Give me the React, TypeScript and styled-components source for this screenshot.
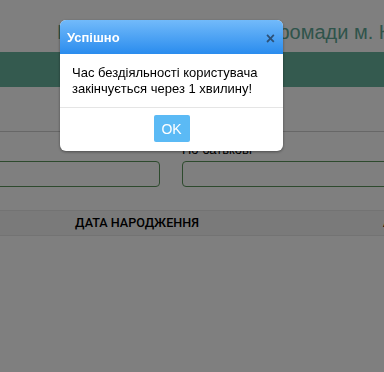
import React from 'react'
import styled, { createGlobalStyle } from 'styled-components'

const GlobalStyle = createGlobalStyle`
  html, body {
    margin: 0;
    padding: 0;
    background: #fff;
    font-family: Arial, "Liberation Sans", sans-serif;
    overflow: hidden;
  }
`

export default function App() {
  return (
    <>
      <GlobalStyle />
      <Page>
        <Title>Реєстр територіальної громади м. Києва</Title>
        <Band />
        <Divider />
        <FormRow>
          <Field>
            <Label>&nbsp;</Label>
            <Input />
          </Field>
          <Field>
            <Label>По батькові</Label>
            <Input />
          </Field>
        </FormRow>
        <TableHead>
          <HeadCell>ДАТА НАРОДЖЕННЯ</HeadCell>
          <HeadCell $align='left'>АДРЕСА</HeadCell>
        </TableHead>
      </Page>

      <Overlay />
      <Modal>
        <ModalHeader>
          <ModalTitle>Успішно</ModalTitle>
          <Close>×</Close>
        </ModalHeader>
        <ModalBody>
          Час бездіяльності користувача
          <br />
          закінчується через 1 хвилину!
        </ModalBody>
        <ModalFooter>
          <OkButton>OK</OkButton>
        </ModalFooter>
      </Modal>
    </>
  )
}

const Page = styled.div`
  width: 384px;
  height: 372px;
  overflow: hidden;
`

const Title = styled.h1`
  margin: 0;
  padding: 20px 0 0 57px;
  height: 52px;
  box-sizing: border-box;
  white-space: nowrap;
  font-weight: normal;
  font-size: 20px;
  line-height: 24px;
  color: #5ea896;
`

const Band = styled.div`
  height: 35px;
  background: #69b49f;
`

const Divider = styled.div`
  margin-top: 44px;
  border-top: 1px solid #cfcfcf;
`

const FormRow = styled.div`
  display: grid;
  grid-template-columns: 180px 1fr;
  gap: 22px;
  margin: 0 -30px 0 -20px;
  padding-top: 10px;
`

const Field = styled.div`
  display: flex;
  flex-direction: column;
`

const Label = styled.label`
  font-size: 13px;
  line-height: 16px;
  color: #000;
  margin-bottom: 3px;
`

const Input = styled.div`
  height: 24px;
  border: 1px solid #5a945a;
  border-radius: 4px;
  background: #fff;
`

const TableHead = styled.div`
  display: grid;
  grid-template-columns: 274px 1fr;
  margin-top: 23px;
  height: 26px;
  border-top: 1px solid #e6e6e6;
  border-bottom: 1px solid #e6e6e6;
  background: #f5f5f5;
  box-sizing: border-box;
`

const HeadCell = styled.div<{ $align?: string }>`
  font-family: Roboto, Arial, sans-serif;
  font-weight: 500;
  font-size: 12.6px;
  line-height: 23px;
  color: #000;
  text-align: ${p => p.$align || 'center'};
  padding-left: ${p => (p.$align === 'left' ? '109px' : '0')};
  white-space: nowrap;
`

const Overlay = styled.div`
  position: fixed;
  inset: 0;
  background: rgba(0, 0, 0, 0.5);
`

const Modal = styled.div`
  position: fixed;
  top: 20px;
  left: 60px;
  width: 223px;
  background: #fff;
  border-radius: 6px;
  overflow: hidden;
  box-shadow: 0 1px 3px rgba(0, 0, 0, 0.4);
`

const ModalHeader = styled.div`
  height: 34px;
  display: flex;
  align-items: center;
  justify-content: space-between;
  padding: 0 8px 0 7px;
  background: linear-gradient(#72bafa, #2a8cee);
`

const ModalTitle = styled.span`
  font-weight: bold;
  font-size: 13px;
  color: #fff;
`

const Close = styled.span`
  font-weight: bold;
  font-size: 16px;
  line-height: 16px;
  color: #2d5177;
  margin-top: 3px;
`

const ModalBody = styled.div`
  padding: 11px 12px 10px;
  font-size: 13px;
  line-height: 16px;
  color: #000;
  border-bottom: 1px solid #e5e5e5;
`

const ModalFooter = styled.div`
  display: flex;
  justify-content: center;
  padding: 7px 0 9px;
`

const OkButton = styled.button`
  width: 36px;
  height: 27px;
  border: none;
  border-radius: 2px;
  background: #5bbaf5;
  color: #fff;
  font-family: Arial, "Liberation Sans", sans-serif;
  font-size: 14px;
  padding: 0;
`
